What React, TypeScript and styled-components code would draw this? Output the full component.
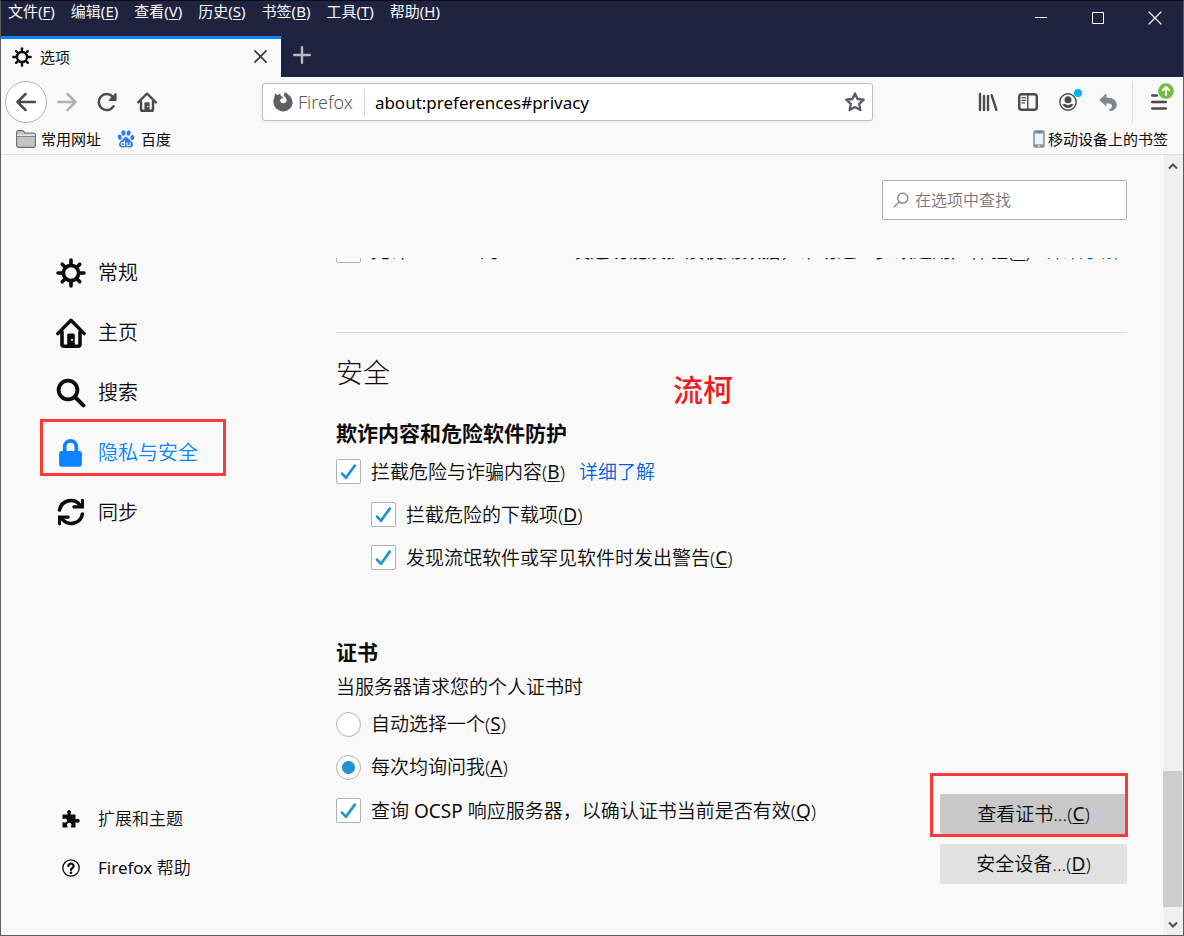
import React, { useState } from "react";
import type { ReactNode } from "react";
import styled, { createGlobalStyle } from "styled-components";

const GlobalStyle = createGlobalStyle`
  * { box-sizing: border-box; }
  body {
    margin: 0;
    background: #f9f9fa;
    color: #0c0c0d;
    font-family: "Noto Sans", "Noto Sans CJK SC", sans-serif;
    font-size: 15px;
    line-height: 20px;
  }
  button, input { font: inherit; color: inherit; }
  button { border: 0; padding: 0; background: none; }
  h2, h3, p { margin: 0; }
  a { text-decoration: none; color: inherit; }
  u { font-weight: 400; text-underline-offset: 2px; }
  svg { display: block; flex: none; }
`;

const Window = styled.div`
  display: flex;
  flex-direction: column;
  min-height: 100vh;
  border: 1px solid #5c5c60;
  border-top-color: #0b0c18;
  background: #f9f9f9;
`;

const TitleArea = styled.header`
  display: flex;
  flex-direction: column;
  background: #20233f;
  color: #f9f9fa;
`;

const TitleRow = styled.div`
  display: flex;
  justify-content: space-between;
  height: 35px;
`;

const MenuBar = styled.nav`
  display: flex;
  align-items: flex-start;
  gap: 16px;
  padding: 0 7px;
`;

const MenuItem = styled.button`
  font-size: 15px;
  line-height: 20px;
  white-space: nowrap;
`;

const WindowControls = styled.div`
  display: flex;
`;

const WindowButton = styled.button`
  display: grid;
  place-items: center;
  width: 57px;
  height: 34px;
`;

const TabRow = styled.div`
  display: flex;
  height: 41px;
`;

const Tab = styled.div`
  display: flex;
  align-items: center;
  gap: 8px;
  width: 280px;
  padding: 0 14px 3px 11px;
  border-top: 3px solid #0a84ff;
  background: #f9f9fa;
  color: #0c0c0d;
`;

const TabTitle = styled.span`
  flex: 1;
`;

const TabClose = styled.button`
  color: #3c3c40;
`;

const NewTabButton = styled.button`
  display: grid;
  place-items: center;
  width: 42px;
  height: 38px;
`;

const NavBar = styled.div`
  display: flex;
  align-items: center;
  height: 50px;
  padding: 0 4px;
  color: #4a4a4f;
`;

const NavButtons = styled.div`
  display: flex;
  align-items: center;
`;

const BackButton = styled.button`
  display: grid;
  place-items: center;
  width: 42px;
  height: 42px;
  border: 1px solid #b1b1b3;
  border-radius: 50%;
  background: #fff;
`;

const IconButton = styled.button<{ $dim?: boolean }>`
  position: relative;
  display: grid;
  place-items: center;
  width: 40px;
  height: 42px;
  opacity: ${(p) => (p.$dim ? 0.4 : 1)};
`;

const UrlBar = styled.div`
  display: flex;
  align-items: center;
  flex: 1;
  height: 38px;
  margin: 0 95px 0 95px;
  padding: 0 7px 0 10px;
  border: 1px solid #bebebe;
  border-radius: 3px;
  background: #fff;
  box-shadow: 0 1px 4px rgba(0, 0, 0, 0.06);
`;

const Identity = styled.span`
  display: flex;
  align-items: center;
  gap: 5px;
  height: 27px;
  padding-right: 11px;
  border-right: 1px solid #d7d7db;
  color: #58585c;
  font-size: 18px;
  font-weight: 300;
`;

const UrlInput = styled.input`
  flex: 1;
  min-width: 0;
  height: 28px;
  padding: 0 10px;
  border: 0;
  outline: 0;
  background: none;
  color: #000;
  font-size: 17px;
`;

const MenuSlot = styled.div`
  display: flex;
  margin-left: 4px;
  padding-left: 6px;
  border-left: 1px solid #dcdcdc;
`;

const StatusDot = styled.i`
  position: absolute;
  top: 8px;
  right: 6px;
  width: 8px;
  height: 8px;
  border-radius: 50%;
  background: #00b3f4;
`;

const UpdateBadge = styled.i`
  position: absolute;
  top: 2px;
  right: 5px;
`;

const BookmarksBar = styled.div`
  display: flex;
  justify-content: space-between;
  height: 28px;
  padding: 0 15px;
  border-bottom: 1px solid #e0e0e1;
`;

const BookmarkGroup = styled.div`
  display: flex;
  gap: 15px;
`;

const Bookmark = styled.a<{ $tight?: boolean }>`
  display: flex;
  align-items: center;
  gap: ${(p) => (p.$tight ? 3 : 5)}px;
  height: 24px;
  color: #0c0c0d;
`;

const Content = styled.div`
  display: flex;
  flex: 1;
`;

const Sidebar = styled.aside`
  display: flex;
  flex-direction: column;
  justify-content: space-between;
  width: 335px;
  flex: none;
  padding: 84px 0 47px 39px;
`;

const SideNav = styled.nav<{ $small?: boolean }>`
  display: flex;
  flex-direction: column;
  align-items: flex-start;
  gap: ${(p) => (p.$small ? 8 : 3)}px;
`;

const Category = styled.a<{ $active?: boolean; $small?: boolean }>`
  display: grid;
  grid-template-columns: 32px auto;
  align-items: center;
  justify-items: center;
  justify-content: start;
  column-gap: 11px;
  width: 186px;
  height: ${(p) => (p.$small ? 41 : 57)}px;
  padding: ${(p) => (p.$small ? 0 : 11)}px 0 0 12px;
  border: 3px solid ${(p) => (p.$active ? "#fd3a3a" : "transparent")};
  color: ${(p) => (p.$active ? "#0a84ff" : "#0c0c0d")};
  font-size: ${(p) => (p.$small ? 17 : 20)}px;
  line-height: 24px;
  white-space: nowrap;
  font-weight: 350;
`;

const CategoryLabel = styled.span`
  justify-self: start;
`;

const Main = styled.main`
  display: flex;
  flex-direction: column;
  flex: 1;
  min-width: 0;
  padding: 25px 35px 51px 0;
  font-size: 19px;
  line-height: 26px;
  font-weight: 350;
`;

const Latin = styled.span`
  font-weight: 400;
`;

const SearchBox = styled.label`
  display: flex;
  align-items: center;
  align-self: flex-end;
  gap: 6px;
  width: 245px;
  height: 40px;
  padding: 0 10px;
  border: 1px solid #b1b1b3;
  border-radius: 2px;
  background: #fff;
  color: #8a8a8d;
`;

const SearchInput = styled.input`
  flex: 1;
  min-width: 0;
  padding: 0;
  border: 0;
  outline: 0;
  background: none;
  font-size: 16px;
  font-weight: 350;
  &::placeholder { color: #76767a; opacity: 1; }
`;

const ScrollPane = styled.div`
  display: flex;
  flex-direction: column;
  flex: 1;
  margin-top: 38px;
`;

const ClippedEdge = styled.div`
  display: flex;
  flex-direction: column;
  justify-content: flex-end;
  height: 5px;
  overflow: hidden;
`;

const Divider = styled.hr`
  width: 100%;
  height: 1px;
  margin: 69px 0 0;
  border: 0;
  background: #d7d7db;
`;

const SectionTitle = styled.h2`
  margin-top: 22px;
  font-size: 27px;
  line-height: 36px;
  font-weight: 300;
`;

const GroupTitle = styled.h3`
  font-size: 21px;
  line-height: 28px;
  font-weight: 700;
`;

const SafetyGroup = styled.section`
  margin-top: 28px;
`;

const CertGroup = styled.section`
  margin-top: 68px;
`;

const OptionList = styled.div<{ $indent?: boolean }>`
  display: flex;
  flex-direction: column;
  gap: 17px;
  padding-left: ${(p) => (p.$indent ? 35 : 0)}px;
`;

const SafetyOptions = styled(OptionList)`
  margin-top: 11px;
`;

const OptionRow = styled.div`
  display: flex;
  align-items: center;
  gap: 14px;
  height: 26px;
  white-space: nowrap;
`;

const OptionLabel = styled.label`
  display: flex;
  align-items: center;
  gap: 10px;
`;

const OptionText = styled.span`
  padding-top: 2px;
`;

const CheckInput = styled.input`
  appearance: none;
  flex: none;
  width: 25px;
  height: 25px;
  margin: 0;
  border: 1px solid #b1b1b3;
  border-radius: 2px;
  background: #fff;
`;

const RadioInput = styled(CheckInput)`
  border-radius: 50%;
  &:checked { background: radial-gradient(circle, #2292d0 6px, #fff 7px); }
`;

const CheckBoxWrap = styled.span`
  display: grid;
  > * { grid-area: 1 / 1; }
  > svg { place-self: center; pointer-events: none; }
`;

const TextLink = styled.a`
  padding-top: 2px;
  color: #0060df;
`;

const CertBody = styled.div`
  display: flex;
  align-items: flex-end;
  justify-content: space-between;
  margin-top: 11px;
`;

const CertOptions = styled(OptionList)`
  margin-bottom: 61px;
`;

const CertHint = styled.p`
  margin-top: 8px;
`;

const CertButtons = styled.div`
  display: flex;
  flex-direction: column;
  gap: 10px;
`;

const ActionButton = styled.button<{ $hover?: boolean }>`
  width: 187px;
  height: 40px;
  border-radius: 2px;
  background: ${(p) => (p.$hover ? "#c8c8c8" : "#e1e1e1")};
`;

const Highlighted = styled.div`
  position: relative;
  display: flex;
  &::after {
    content: "";
    position: absolute;
    inset: -21px -1px -3px -10px;
    border: 3px solid #fd3a3a;
    pointer-events: none;
  }
`;

const TitleHolder = styled.div`
  position: relative;
`;

const Watermark = styled.span`
  position: absolute;
  top: 37px;
  left: 337px;
  color: #ed1c24;
  font-size: 30px;
  line-height: 40px;
  font-weight: 500;
`;

const ScrollBar = styled.div`
  display: flex;
  flex-direction: column;
  align-items: center;
  width: 21px;
  padding: 6px 1px 5px 0;
  border-left: 1px solid #fff;
  background: #f0f0f0;
`;

const ScrollTrack = styled.div`
  display: flex;
  flex-direction: column;
  flex: 1;
  width: 100%;
  padding: 0 0 13px;
`;

const ScrollSpace = styled.div`
  flex: 600;
`;

const ScrollThumb = styled.div`
  flex: 136;
  background: #cdcdcd;
`;

function GearIcon({ size }: { size: number }) {
  const angles = [0, 45, 90, 135, 180, 225, 270, 315];
  return (
    <svg width={size} height={size} viewBox="0 0 30 30" fill="none" stroke="currentColor">
      <circle cx="15" cy="15" r="7.6" strokeWidth="3.6" />
      {angles.map((a) => (
        <path
          key={a}
          d={a % 90 ? "M15 6.5V2.6" : "M15 6.5V2"}
          strokeWidth="3.6"
          strokeLinecap="round"
          transform={`rotate(${a} 15 15)`}
        />
      ))}
    </svg>
  );
}

function HomeIcon({ size }: { size: number }) {
  return (
    <svg width={size} height={size} viewBox="0 0 30 30" fill="none" stroke="currentColor" strokeLinecap="round" strokeLinejoin="round">
      <path d="M1.8 15.6 15 2.2l13.2 13.4" strokeWidth="3.4" />
      <path d="M6 14v12.2q0 2 2 2h14q2 0 2-2V14" strokeWidth="3.6" />
      <path d="M11.2 28v-11q0-1.6 1.6-1.6h4.4q1.6 0 1.6 1.6v11z" fill="currentColor" stroke="none" />
      <circle cx="16" cy="21.8" r="1.1" fill="#f9f9f9" stroke="none" />
    </svg>
  );
}

function SearchIcon() {
  return (
    <svg width="30" height="30" viewBox="0 0 30 30" fill="none" stroke="currentColor" strokeLinecap="round">
      <circle cx="12" cy="12" r="9.4" strokeWidth="3.8" />
      <path d="m19 19 8.4 8.4" strokeWidth="4" />
    </svg>
  );
}

function LockIcon() {
  return (
    <svg width="30" height="30" viewBox="0 0 30 30" fill="currentColor">
      <path d="M5.500 13h18a2.4 2.4 0 0 1 2.4 2.4v11A2.4 2.4 0 0 1 23.500 28.800H5.500a2.400 2.400 0 0 1-2.400-2.400v-11A2.400 2.400 0 0 1 5.500 13z" />
      <path d="M8.700 14V8.600a5.800 5.800 0 0 1 11.600 0V14" fill="none" stroke="currentColor" strokeWidth="3.800" />
    </svg>
  );
}

function SyncIcon() {
  return (
    <svg width="30" height="30" viewBox="0 0 30 30" fill="none" stroke="currentColor" strokeWidth="3.600" strokeLinecap="round">
      <path d="M3.600 12A11.400 11.400 0 0 1 24 7.200" />
      <path d="M26.400 16A11.400 11.400 0 0 1 6 20.800" />
      <path d="M17.200 10.400H28V1.600q-1.800-1.800-3 0V7.200H17.200q-2 1.600 0 3.200z" fill="currentColor" stroke="none" />
      <path d="M12.800 17.600H2V26.400q1.800 1.800 3 0V20.800H12.800q2-1.600 0-3.200z" fill="currentColor" stroke="none" />
    </svg>
  );
}

function PuzzleIcon() {
  return (
    <svg width="18" height="18" viewBox="0 0 18 18" fill="currentColor">
      <path d="M0.500 4.500H5.500Q6 4 5.400 3.200A2 2 0 1 1 8.800 3.200Q8.300 4 8.800 4.500H13.500V9Q14 9.600 14.800 9A2 2 0 1 1 14.800 12.600Q14 12 13.500 12.600V17.500H9V16Q10 15 9 13.800A2.200 2.200 0 0 0 5.400 13.800Q4.600 15 5.400 16V17.500H0.500V12.600Q1.300 12 2.400 12.500A2 2 0 1 0 2.400 8.700Q1.300 9.300 0.500 8.600z" />
    </svg>
  );
}

function HelpIcon() {
  return (
    <svg width="18" height="18" viewBox="0 0 18 18" fill="none" stroke="currentColor">
      <circle cx="9" cy="9" r="8.200" strokeWidth="1.300" />
      <path d="M6.400 7a2.600 2.400 0 1 1 4 2Q9 9.700 9 11" strokeWidth="2.200" strokeLinecap="round" />
      <circle cx="9" cy="13.800" r="1.300" fill="currentColor" stroke="none" />
    </svg>
  );
}

function CloseIcon({ size, stroke }: { size: number; stroke: number }) {
  return (
    <svg width={size} height={size} viewBox="0 0 14 14" fill="none" stroke="currentColor" strokeWidth={stroke} strokeLinecap="round">
      <path d="m1 1 12 12M13 1 1 13" />
    </svg>
  );
}

function ArrowIcon({ flip }: { flip?: boolean }) {
  return (
    <svg width="20" height="20" viewBox="0 0 20 20" fill="none" stroke="currentColor" strokeWidth="2.500" strokeLinecap="round" strokeLinejoin="round">
      <path d={flip ? "M1 10h17.500M10.500 2l8 8-8 8" : "M19 10H1.500M9.500 2l-8 8 8 8"} />
    </svg>
  );
}

function ReloadIcon() {
  return (
    <svg width="20" height="20" viewBox="0 0 20 20" fill="none" stroke="currentColor" strokeWidth="2.500" strokeLinecap="round">
      <path d="M16.600 14.200A8 8 0 1 1 15.600 4.600" />
      <path d="M19.600 1.400v6.800q0 .8-.8.8H12.200q-.8-.5-.2-1.200L18.300 1.200q.8-.6 1.300.2z" fill="currentColor" stroke="none" />
    </svg>
  );
}

function FirefoxIcon() {
  return (
    <svg width="20" height="20" viewBox="0 0 20 20" fill="#5f5f62">
      <path d="M2.600 1.200Q3.200 2.800 4.600 3.300Q5.800 2 7.400 1.600Q7 3 8.300 4.200L10 5Q9.800 6.400 7.800 6.900Q6.800 8 7.200 9Q8 11.600 10.800 11.300Q13.900 10.600 13.700 7.600Q13 5 10.800 3.700Q12 1.800 10.600.4Q14.600.6 16 3.600Q17.200 3.800 17.800 5.200Q20 8 19.600 11.400A9.700 9.700 0 0 1 .4 10.800Q0 7.400 1.400 5.400Q1.400 2.800 2.600 1.200z" />
    </svg>
  );
}

function StarIcon() {
  return (
    <svg width="20" height="20" viewBox="0 0 20 20" fill="none" stroke="#5a5a5e" strokeWidth="2.300" strokeLinejoin="round">
      <path d="m10 1.400 2.600 5.600 6.100.7-4.500 4.200 1.200 6.200L10 15.100l-5.400 3 1.200-6.200L1.300 7.700l6.100-.7z" />
    </svg>
  );
}

function LibraryIcon() {
  return (
    <svg width="20" height="20" viewBox="0 0 20 20" fill="none" stroke="currentColor" strokeWidth="2.400" strokeLinecap="round">
      <path d="M2 2v16M6 4v14M10 4v14" />
      <path d="m13.600 3.200 4.800 14.600" />
    </svg>
  );
}

function SidebarIcon() {
  return (
    <svg width="20" height="18" viewBox="0 0 20 18" fill="none" stroke="currentColor">
      <rect x="1.200" y="1.200" width="17.600" height="15.600" rx="2.600" strokeWidth="2.400" />
      <path d="M9.700 1v16" strokeWidth="1.400" />
      <path d="M4 4.700h3.500M4 7.300h3.500M4 9.900h2.500" strokeWidth="1.200" strokeLinecap="round" />
    </svg>
  );
}

function AccountIcon() {
  return (
    <svg width="18" height="18" viewBox="0 0 18 18" fill="currentColor">
      <circle cx="9" cy="9" r="8.200" fill="none" stroke="currentColor" strokeWidth="1.400" />
      <circle cx="9" cy="6.800" r="3.500" />
      <path d="M3.800 11h2.400Q9 13.200 11.800 11h2.400Q13 15 9 15T3.800 11z" />
    </svg>
  );
}

function UndoIcon() {
  return (
    <svg width="18" height="18" viewBox="0 0 18 18" fill="#7d8792">
      <path d="M7.400.2V4.400Q17.600 4.600 17.800 12Q17.600 16 12.600 18Q9.600 17.800 9.400 16.800Q13.200 15.600 13 12.800Q12.600 10 7.400 10.200V13.600L.2 7z" />
    </svg>
  );
}

function MenuIcon() {
  return (
    <svg width="16" height="16" viewBox="0 0 16 16" fill="none" stroke="currentColor" strokeWidth="2.400" strokeLinecap="round">
      <path d="M1.200 1.500h4.600M1.200 8h13.600M1.200 14.500h13.600" />
    </svg>
  );
}

function BadgeIcon() {
  return (
    <svg width="16" height="16" viewBox="0 0 16 16" fill="none">
      <circle cx="8" cy="8" r="7.800" fill="#6fbe3f" />
      <path d="M8 12.800V4.200M4.200 7.800 8 4l3.800 3.800" stroke="#fff" strokeWidth="2" />
    </svg>
  );
}

function FolderIcon() {
  return (
    <svg width="20" height="18" viewBox="0 0 20 18" fill="#c4c4c6" stroke="#6a6a6d">
      <path d="M.6 2.600q0-2 2-2h3.800q1.200 0 1.600 1.200l.6 1.200h9q1.800 0 1.800 1.800v10.800q0 1.800-1.800 1.800H2.400q-1.800 0-1.800-1.800z" strokeWidth="1.100" />
      <path d="M1.200 5.400h17.600" stroke="#f0f0f0" strokeWidth="1.400" />
      <path d="M.6 6.400h18.800" strokeWidth=".8" />
    </svg>
  );
}

function BaiduIcon() {
  return (
    <svg width="20" height="20" viewBox="0 0 20 20" fill="#2b7cf5">
      <rect width="20" height="20" fill="#fff" />
      <ellipse cx="3.700" cy="8.200" rx="2" ry="2.700" transform="rotate(-12 3.700 8.200)" />
      <ellipse cx="7.400" cy="4" rx="2" ry="2.800" />
      <ellipse cx="12.600" cy="4" rx="2" ry="2.800" transform="rotate(12 12.600 4)" />
      <ellipse cx="16.300" cy="8.600" rx="2" ry="2.700" transform="rotate(10 16.300 8.600)" />
      <path d="M10 8Q11.800 8 13 10L16 13Q18.200 16 15.800 18Q14 19 11.600 18.300Q10 18 8.400 18.300Q5.600 19 4 17.800Q2 16 4 13L7 10Q8.200 8 10 8z" />
      <path d="M8.500 11.500V16.500H6.600A1.300 1.300 0 0 1 6.600 13.600H8.500M11 13.400V15.800Q11 16.500 12 16.500H14V13.400" fill="none" stroke="#fff" strokeWidth="1.100" />
    </svg>
  );
}

function PhoneIcon() {
  return (
    <svg width="12" height="18" viewBox="0 0 12 18">
      <rect x=".5" y=".5" width="11" height="17" rx="1.800" fill="#87929b" stroke="#a3abb2" />
      <rect x="1.800" y="3.500" width="8.400" height="10.800" fill="#eef3f6" />
      <circle cx="6" cy="16" r="1" fill="#d5dade" />
      <path d="M4 2h4" stroke="#5e6870" />
    </svg>
  );
}

function CheckMark() {
  return (
    <svg width="25" height="25" viewBox="0 0 25 25" fill="none" stroke="#2292d0" strokeWidth="2.700" strokeLinecap="round" strokeLinejoin="round">
      <path d="m6 14.600 4 4.200L18.800 6.600" />
    </svg>
  );
}

function CheckOption({ children }: { children: ReactNode }) {
  const [on, setOn] = useState(true);
  return (
    <OptionLabel>
      <CheckBoxWrap>
        <CheckInput type="checkbox" checked={on} onChange={() => setOn(!on)} />
        {on && <CheckMark />}
      </CheckBoxWrap>
      <OptionText>{children}</OptionText>
    </OptionLabel>
  );
}

function Key({ children }: { children: string }) {
  return (
    <>
      (<u>{children}</u>)
    </>
  );
}

const menus: [string, string][] = [
  ["文件", "F"],
  ["编辑", "E"],
  ["查看", "V"],
  ["历史", "S"],
  ["书签", "B"],
  ["工具", "T"],
  ["帮助", "H"],
];

const categories = [
  { label: "常规", icon: <GearIcon size={30} /> },
  { label: "主页", icon: <HomeIcon size={30} /> },
  { label: "搜索", icon: <SearchIcon /> },
  { label: "隐私与安全", icon: <LockIcon />, active: true },
  { label: "同步", icon: <SyncIcon /> },
];

export default function App() {
  const [choice, setChoice] = useState("ask");
  return (
    <Window>
      <GlobalStyle />
      <TitleArea>
        <TitleRow>
          <MenuBar>
            {menus.map(([name, key]) => (
              <MenuItem key={key}>
                {name}
                <Key>{key}</Key>
              </MenuItem>
            ))}
          </MenuBar>
          <WindowControls>
            <WindowButton aria-label="最小化">
              <svg width="12" height="12" viewBox="0 0 12 12" stroke="#fff"><path d="M0 5.500h12" /></svg>
            </WindowButton>
            <WindowButton aria-label="最大化">
              <svg width="12" height="12" viewBox="0 0 12 12" stroke="#fff" fill="none"><path d="M.5.500h11v11H.5z" /></svg>
            </WindowButton>
            <WindowButton aria-label="关闭">
              <CloseIcon size={14} stroke={1.2} />
            </WindowButton>
          </WindowControls>
        </TitleRow>
        <TabRow>
          <Tab>
            <GearIcon size={20} />
            <TabTitle>选项</TabTitle>
            <TabClose aria-label="关闭标签页"><CloseIcon size={13} stroke={1.8} /></TabClose>
          </Tab>
          <NewTabButton aria-label="新建标签页">
            <svg width="18" height="18" viewBox="0 0 18 18" stroke="#b9bac6" strokeWidth="2.400" strokeLinecap="round"><path d="M9 1.200v15.600M1.200 9h15.600" /></svg>
          </NewTabButton>
        </TabRow>
      </TitleArea>

      <NavBar>
        <NavButtons>
          <BackButton aria-label="后退"><ArrowIcon /></BackButton>
          <IconButton aria-label="前进" $dim><ArrowIcon flip /></IconButton>
          <IconButton aria-label="刷新"><ReloadIcon /></IconButton>
          <IconButton aria-label="主页"><HomeIcon size={20} /></IconButton>
        </NavButtons>
        <UrlBar>
          <Identity><FirefoxIcon />Firefox</Identity>
          <UrlInput aria-label="地址" defaultValue="about:preferences#privacy" />
          <button aria-label="添加书签"><StarIcon /></button>
        </UrlBar>
        <NavButtons>
          <IconButton aria-label="书库"><LibraryIcon /></IconButton>
          <IconButton aria-label="侧栏"><SidebarIcon /></IconButton>
          <IconButton aria-label="账户"><AccountIcon /><StatusDot /></IconButton>
          <IconButton aria-label="撤销"><UndoIcon /></IconButton>
          <MenuSlot>
            <IconButton aria-label="菜单">
              <MenuIcon />
              <UpdateBadge><BadgeIcon /></UpdateBadge>
            </IconButton>
          </MenuSlot>
        </NavButtons>
      </NavBar>

      <BookmarksBar>
        <BookmarkGroup>
          <Bookmark href="#"><FolderIcon />常用网址</Bookmark>
          <Bookmark href="#"><BaiduIcon />百度</Bookmark>
        </BookmarkGroup>
        <Bookmark href="#" $tight><PhoneIcon />移动设备上的书签</Bookmark>
      </BookmarksBar>

      <Content>
        <Sidebar>
          <SideNav>
            {categories.map((c) => (
              <Category key={c.label} href="#" $active={c.active}>
                {c.icon}
                <CategoryLabel>{c.label}</CategoryLabel>
              </Category>
            ))}
          </SideNav>
          <SideNav $small>
            <Category href="#" $small><PuzzleIcon /><CategoryLabel>扩展和主题</CategoryLabel></Category>
            <Category href="#" $small>
              <HelpIcon />
              <CategoryLabel><Latin>Firefox</Latin> 帮助</CategoryLabel>
            </Category>
          </SideNav>
        </Sidebar>

        <Main>
          <SearchBox>
            <svg width="16" height="16" viewBox="0 0 16 16" fill="none" stroke="#76767a" strokeWidth="1.200" strokeLinecap="round">
              <circle cx="9.800" cy="6.200" r="5" /><path d="m6.200 9.800-5 5" />
            </svg>
            <SearchInput aria-label="在选项中查找" placeholder="在选项中查找" />
          </SearchBox>

          <ScrollPane>
            <ClippedEdge>
              <OptionRow>
                <CheckOption>
                  允许 <Latin>Firefox</Latin> 向 <Latin>Mozilla</Latin> 发送功能及扩展使用数据，帮助进一步改进用户体验<Key>R</Key>
                </CheckOption>
                <TextLink href="#">详细了解</TextLink>
              </OptionRow>
            </ClippedEdge>
            <Divider />
            <TitleHolder>
              <SectionTitle>安全</SectionTitle>
              <Watermark>流柯</Watermark>
            </TitleHolder>

            <SafetyGroup>
              <GroupTitle>欺诈内容和危险软件防护</GroupTitle>
              <SafetyOptions>
                <OptionRow>
                  <CheckOption>拦截危险与诈骗内容<Key>B</Key></CheckOption>
                  <TextLink href="#">详细了解</TextLink>
                </OptionRow>
                <OptionList $indent>
                  <OptionRow><CheckOption>拦截危险的下载项<Key>D</Key></CheckOption></OptionRow>
                  <OptionRow><CheckOption>发现流氓软件或罕见软件时发出警告<Key>C</Key></CheckOption></OptionRow>
                </OptionList>
              </SafetyOptions>
            </SafetyGroup>

            <CertGroup>
              <GroupTitle>证书</GroupTitle>
              <CertHint>当服务器请求您的个人证书时</CertHint>
              <CertBody>
                <CertOptions>
                  <OptionRow>
                    <OptionLabel>
                      <RadioInput type="radio" name="cert" checked={choice === "auto"} onChange={() => setChoice("auto")} />
                      <span>自动选择一个<Key>S</Key></span>
                    </OptionLabel>
                  </OptionRow>
                  <OptionRow>
                    <OptionLabel>
                      <RadioInput type="radio" name="cert" checked={choice === "ask"} onChange={() => setChoice("ask")} />
                      <span>每次均询问我<Key>A</Key></span>
                    </OptionLabel>
                  </OptionRow>
                  <OptionRow>
                    <CheckOption>查询 <Latin>OCSP</Latin> 响应服务器，以确认证书当前是否有效<Key>Q</Key></CheckOption>
                  </OptionRow>
                </CertOptions>
                <CertButtons>
                  <Highlighted><ActionButton $hover>查看证书...<Key>C</Key></ActionButton></Highlighted>
                  <ActionButton>安全设备...<Key>D</Key></ActionButton>
                </CertButtons>
              </CertBody>
            </CertGroup>
          </ScrollPane>
        </Main>

        <ScrollBar>
          <svg width="10" height="10" viewBox="0 0 10 10" fill="none" stroke="#505050" strokeWidth="2"><path d="M1 7.500 5 3.500l4 4" /></svg>
          <ScrollTrack>
            <ScrollSpace />
            <ScrollThumb />
          </ScrollTrack>
          <svg width="10" height="10" viewBox="0 0 10 10" fill="none" stroke="#505050" strokeWidth="2"><path d="M1 2.500 5 6.500l4-4" /></svg>
        </ScrollBar>
      </Content>
    </Window>
  );
}
